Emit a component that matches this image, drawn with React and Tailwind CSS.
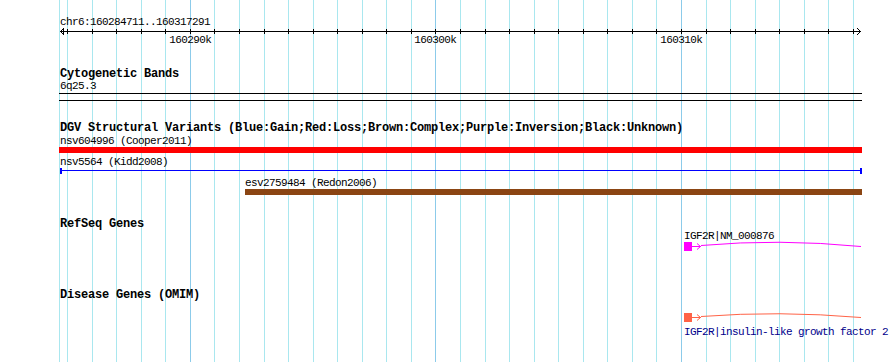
const TICKS = [
  67, 92, 116, 141, 165, 190, 214, 239, 264, 288, 313, 337, 362, 386, 411, 435, 460,
  485, 509, 534, 558, 583, 607, 632, 656, 681, 706, 730, 755, 779, 804, 828, 853,
];
const MAJOR = { 190: "160290k", 435: "160300k", 681: "160310k" };

function Grid() {
  return (
    <svg className="absolute inset-0" width="890" height="362" shapeRendering="crispEdges">
      <line x1="59.5" y1="0" x2="59.5" y2="362" stroke="#a9e7ef" />
      {TICKS.map((x) => (
        <line
          key={x}
          x1={x + 0.5}
          y1="0"
          x2={x + 0.5}
          y2="362"
          stroke={MAJOR[x] ? "#8ccbea" : "#a9e7ef"}
        />
      ))}
    </svg>
  );
}

function Ruler() {
  return (
    <svg width="890" height="50" className="block text-[11px] tracking-[-0.6px]">
      <text x="60" y="25" fill="#000">chr6:160284711..160317291</text>
      <g stroke="#000" fill="none" shapeRendering="crispEdges">
        <line x1="60" y1="31.5" x2="861" y2="31.5" />
        {TICKS.map((x) => (
          <line key={x} x1={x + 0.5} y1="29" x2={x + 0.5} y2="34" />
        ))}
        <line x1="63.5" y1="29" x2="63.5" y2="34" />
        <polyline points="64,28 60.5,31.5 64,35" />
        <polyline points="857,28 860.5,31.5 857,35" />
      </g>
      {Object.entries(MAJOR).map(([x, label]) => (
        <text key={x} x={Number(x) + 0.3} y="43" textAnchor="middle" fill="#000">
          {label}
        </text>
      ))}
    </svg>
  );
}

function TrackTitle({ children, className = "" }) {
  return (
    <div className={`h-[12px] pl-[60px] text-[12px] leading-[12px] font-bold tracking-[-0.2px] whitespace-nowrap ${className}`}>
      {children}
    </div>
  );
}

function GeneGlyph({ color, hatPeak }) {
  return (
    <g stroke={color} fill="none">
      <rect x="684" y="12" width="8" height="9" fill={color} stroke="none" />
      <line x1="692" y1="16.5" x2="701" y2="16.5" shapeRendering="crispEdges" />
      <polyline points="697,13.5 700.5,16.5 697,19.5" />
      <path d={`M701 15.5 Q 779 ${hatPeak} 861 16.5`} />
    </g>
  );
}

export default function App() {
  return (
    <div className="relative w-[890px] h-[362px] overflow-hidden bg-white text-black font-['Liberation_Mono',monospace]">
      <Grid />
      <div className="relative flex flex-col">
        <Ruler />

        {/* Cytogenetic bands */}
        <TrackTitle className="mt-[18px]">Cytogenetic Bands</TrackTitle>
        <svg width="890" height="22" className="block text-[11px] tracking-[-0.6px]">
          <text x="60" y="8.5" fill="#000">6q25.3</text>
          <g stroke="#000" shapeRendering="crispEdges">
            <line x1="59" y1="13.5" x2="862" y2="13.5" />
            <line x1="59" y1="20.5" x2="862" y2="20.5" />
          </g>
        </svg>

        {/* DGV */}
        <TrackTitle className="mt-[20px]">
          DGV Structural Variants (Blue:Gain;Red:Loss;Brown:Complex;Purple:Inversion;Black:Unknown)
        </TrackTitle>
        <svg width="890" height="66" className="block text-[11px] tracking-[-0.6px]" shapeRendering="crispEdges">
          <text x="60" y="10" fill="#000">nsv604996 (Cooper2011)</text>
          <rect x="59" y="13" width="803" height="6" fill="#ff0000" />

          <text x="60" y="31" fill="#000">nsv5564 (Kidd2008)</text>
          <line x1="60" y1="36.5" x2="862" y2="36.5" stroke="#0000ff" />
          <rect x="60" y="34" width="2" height="6" fill="#0000ff" />
          <rect x="860" y="34" width="2" height="6" fill="#0000ff" />

          <text x="245" y="52" fill="#000">esv2759484 (Redon2006)</text>
          <rect x="245" y="55" width="617" height="6" fill="#8b4513" />
        </svg>

        {/* RefSeq */}
        <TrackTitle className="mt-[18px]">RefSeq Genes</TrackTitle>
        <svg width="890" height="26" className="block text-[11px] tracking-[-0.6px]">
          <text x="684" y="8.5" fill="#000">IGF2R|NM_000876</text>
          <GeneGlyph color="#ff00ff" hatPeak={8.5} />
        </svg>

        {/* OMIM */}
        <TrackTitle className="mt-[33px]">Disease Genes (OMIM)</TrackTitle>
        <svg width="890" height="40" className="block text-[11px] tracking-[-0.6px]">
          <GeneGlyph color="#ff6347" hatPeak={9.5} />
          <text x="684" y="34" fill="#00008b">IGF2R|insulin-like growth factor 2</text>
        </svg>
      </div>
    </div>
  );
}
